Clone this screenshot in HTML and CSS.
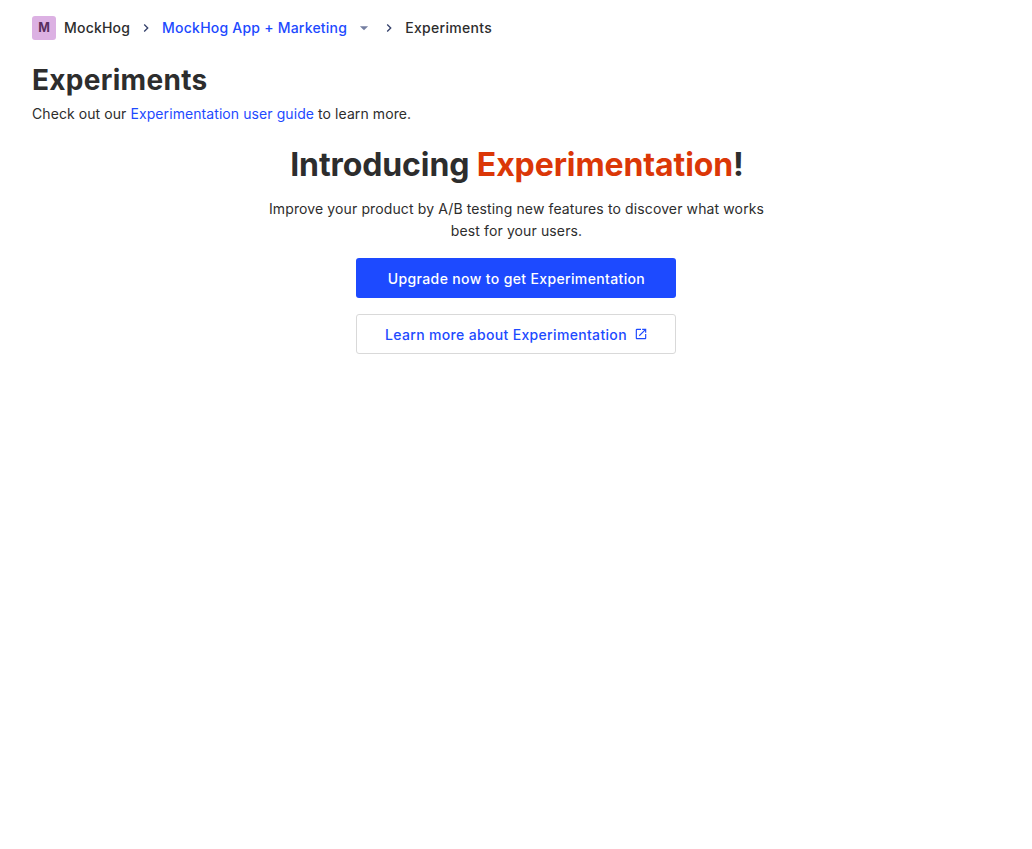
FILE: index.html
```
<!DOCTYPE html>
<html lang="en">
<head>
<meta charset="utf-8">
<title>Experiments</title>
<link rel="stylesheet" href="styles.css">
</head>
<body>
<main class="scene">
  <nav class="breadcrumbs">
    <span class="lettermark">M</span>
    <span class="crumb crumb-org">MockHog</span>
    <svg class="chevron" viewBox="0 0 24 24"><path d="M8.6 16.6 13.2 12 8.6 7.4 10 6l6 6-6 6z"/></svg>
    <a class="crumb crumb-project">MockHog App + Marketing</a>
    <svg class="dropdown" viewBox="0 0 24 24"><path d="m5 9 7 7 7-7z"/></svg>
    <svg class="chevron" viewBox="0 0 24 24"><path d="M8.6 16.6 13.2 12 8.6 7.4 10 6l6 6-6 6z"/></svg>
    <span class="crumb crumb-page">Experiments</span>
  </nav>
  <h1 class="page-title">Experiments</h1>
  <p class="caption">Check out our <a class="link">Experimentation user guide</a> to learn more.</p>
  <section class="paygate">
    <h2 class="paygate-title">Introducing <span class="highlight">Experimentation</span>!</h2>
    <p class="paygate-text">Improve your product by A/B testing new features to discover what works best for your users.</p>
    <a class="button button-primary">Upgrade now to get Experimentation</a>
    <a class="button button-secondary"><span>Learn more about Experimentation</span>
      <svg class="external" viewBox="0 0 24 24"><path d="M5 21q-.82 0-1.410-.59Q3 19.830 3 19V5q0-.82.590-1.410Q4.170 3 5 3h7v2H5v14h14v-7h2v7q0 .83-.59 1.410Q19.830 21 19 21zm4.700-5.300-1.400-1.400L17.600 5H14V3h7v7h-2V6.400z"/></svg>
    </a>
  </section>
</main>
</body>
</html>
```
FILE: styles.css
```
body {
  margin: 0;
  background: #fff;
  color: #2d2d2d;
  font: 400 14px/20px Inter, "Liberation Sans", sans-serif;
}
.scene { padding: 16px 32px; }
.breadcrumbs { display: flex; align-items: center; height: 24px; }
.lettermark {
  width: 24px;
  height: 24px;
  margin-right: 8px;
  border-radius: 3px;
  background: #dcb1e3;
  color: #572e5e;
  font-size: 12.5px;
  font-weight: 700;
  line-height: 24px;
  text-align: center;
}
.crumb { font-weight: 500; white-space: nowrap; letter-spacing: 0.2px; }
.crumb-project, .link { color: #1d4aff; }
.crumb-project { letter-spacing: 0.22px; }
.crumb-page { letter-spacing: 0.32px; }
.chevron { width: 16px; height: 16px; margin: 0 8px; fill: #35416b; }
.dropdown { width: 14px; height: 14px; margin: 0 2px 0 10px; fill: #747ea1; }
.page-title { margin: 22px 0 0; font-size: 28px; line-height: 36px; font-weight: 700; letter-spacing: 0.3px; }
.caption { margin: 6px 0 0; letter-spacing: 0.08px; }
.paygate { display: flex; flex-direction: column; align-items: center; margin-top: 21px; }
.paygate-title { margin: 0; padding-left: 2px; font-size: 32px; line-height: 40px; font-weight: 700; letter-spacing: -0.1px; }
.highlight { color: #db3707; }
.paygate-text { width: 512px; margin: 13px 0 16px; padding-left: 1px; line-height: 22px; text-align: center; letter-spacing: 0.12px; }
.button {
  display: flex;
  align-items: center;
  justify-content: center;
  box-sizing: border-box;
  width: 320px;
  height: 40px;
  padding: 2px 0 0 1px;
  border-radius: 3px;
  font-weight: 500;
  letter-spacing: 0.36px;
  white-space: nowrap;
}
.button-primary { background: #1d4aff; color: #fff; }
.button-secondary { gap: 7px; margin-top: 16px; border: 1px solid #d9d9d9; color: #1d4aff; letter-spacing: 0.33px; }
.external { width: 14px; height: 14px; margin-bottom: 2px; fill: currentColor; }
```
